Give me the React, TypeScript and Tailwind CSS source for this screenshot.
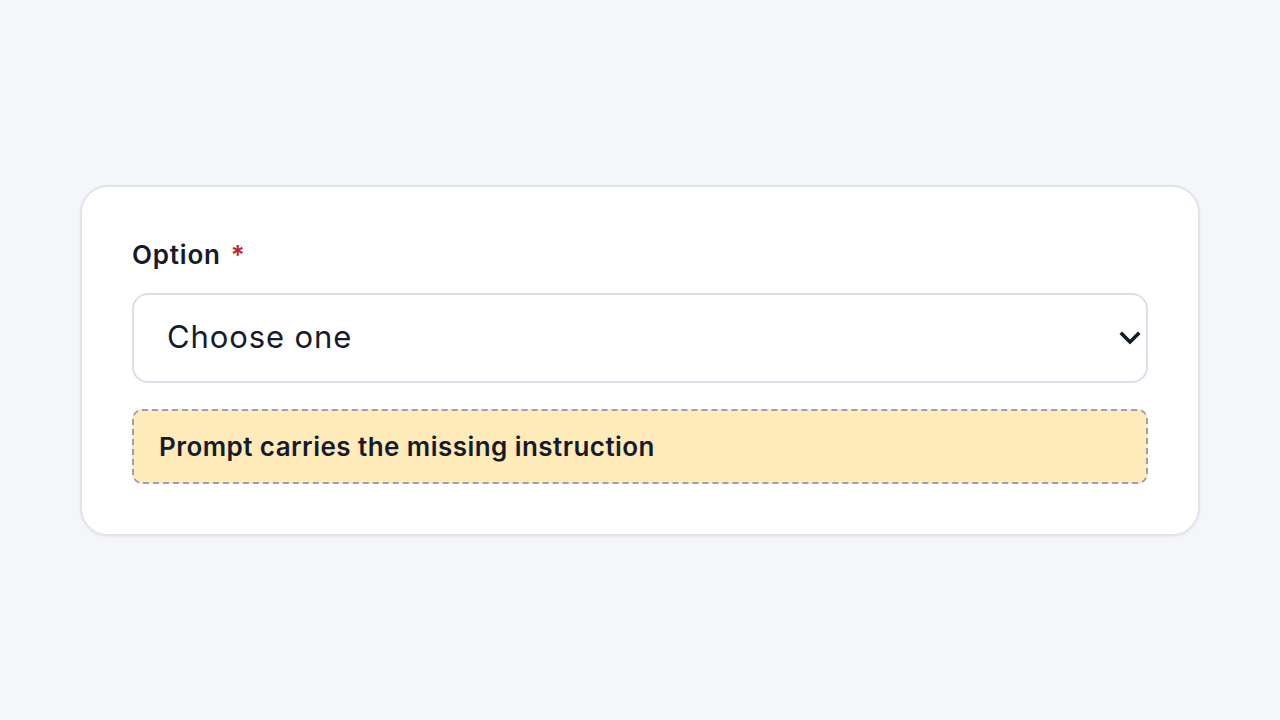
export default function App() {
  return (
    <div
      className="flex min-h-[720px] w-full items-center justify-center bg-[#f5f6fa]"
      style={{ fontFamily: 'Inter, "Noto Sans", sans-serif' }}
    >
      <div className="flex w-[1120px] flex-col rounded-[28px] border-2 border-[#e2e4ec] bg-white px-[50px] py-[50px] shadow-[0_1px_3px_rgba(20,24,40,0.06)]">
        <label className="mb-[20px] flex items-center gap-[10px] text-[26px] font-semibold leading-[36px] tracking-[0.8px] text-[#161b2b]">
          <span>Option</span>
          <span className="text-[#c0262d]">*</span>
        </label>

        <div className="relative">
          <select className="h-[90px] w-full appearance-none rounded-[16px] border-2 border-[#dcdfe9] bg-white pl-[33px] text-[31px] tracking-[0.9px] text-[#161b2b] outline-none">
            <option>Choose one</option>
          </select>
          <svg
            className="pointer-events-none absolute right-[7px] top-1/2 -translate-y-1/2"
            width="22"
            height="14"
            viewBox="0 0 22 14"
            fill="none"
          >
            <path d="M3 3 L11 11 L19 3" stroke="#161b2b" strokeWidth="3.6" strokeLinecap="square" />
          </svg>
        </div>

        <div className="mt-[26px] flex h-[75px] items-center rounded-[10px] border-2 border-dashed border-[#9aa1b5] bg-[#ffebb9] px-[25px]">
          <p className="text-[26px] font-semibold tracking-[0.45px] text-[#161b2b]">
            Prompt carries the missing instruction
          </p>
        </div>
      </div>
    </div>
  );
}
